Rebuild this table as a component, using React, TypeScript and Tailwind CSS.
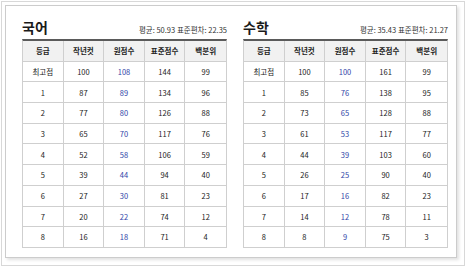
import React from 'react';

type Row = [string, number, number, number, number];

type Subject = {
  title: string;
  avg: string;
  sd: string;
  rows: Row[];
};

const HEADERS = ['등급', '작년컷', '원점수', '표준점수', '백분위'];

const SUBJECTS: Subject[] = [
  {
    title: '국어',
    avg: '50.93',
    sd: '22.35',
    rows: [
      ['최고점', 100, 108, 144, 99],
      ['1', 87, 89, 134, 96],
      ['2', 77, 80, 126, 88],
      ['3', 65, 70, 117, 76],
      ['4', 52, 58, 106, 59],
      ['5', 39, 44, 94, 40],
      ['6', 27, 30, 81, 23],
      ['7', 20, 22, 74, 12],
      ['8', 16, 18, 71, 4]
    ]
  },
  {
    title: '수학',
    avg: '35.43',
    sd: '21.27',
    rows: [
      ['최고점', 100, 100, 161, 99],
      ['1', 85, 76, 138, 95],
      ['2', 73, 65, 128, 88],
      ['3', 61, 53, 117, 77],
      ['4', 44, 39, 103, 60],
      ['5', 26, 25, 90, 40],
      ['6', 17, 16, 82, 23],
      ['7', 14, 12, 78, 11],
      ['8', 8, 9, 75, 3]
    ]
  }
];

const ScoreTable = ({ subject }: { subject: Subject }) => {
  return (
    <div className="w-[205px] flex flex-col">
      <div className="h-[33px] flex justify-between items-end pb-[5px]">
        <span className="text-[14px] leading-none font-bold text-[#1a1a1a]">{subject.title}</span>
        <span className="text-[7.5px] leading-none text-[#333] mb-[1px]">
          평균: {subject.avg} 표준편차: {subject.sd}
        </span>
      </div>
      <div className="border-t-2 border-[#5a5a5a] border-x border-x-[#cfcfcf]">
        <div className="grid grid-cols-5 h-[20.7px] bg-[#f1f1f1] border-b border-[#cfcfcf]">
          {HEADERS.map((h, i) => (
            <div
              key={h}
              className={
                'flex items-center justify-center text-[7.5px] font-bold text-[#222] ' +
                (i < 4 ? 'border-r border-[#cfcfcf]' : '')
              }
            >
              {h}
            </div>
          ))}
        </div>
        {subject.rows.map((row) => (
          <div key={row[0]} className="grid grid-cols-5 h-[20.7px] border-b border-[#cfcfcf]">
            {row.map((v, i) => (
              <div
                key={i}
                className={
                  'flex items-center justify-center text-[7.5px] ' +
                  (i === 2 ? 'text-[#2f45a8] ' : 'text-[#222] ') +
                  (i < 4 ? 'border-r border-[#cfcfcf]' : '')
                }
              >
                {v}
              </div>
            ))}
          </div>
        ))}
      </div>
    </div>
  );
};

export default function App() {
  return (
    <div
      className="w-[466px] h-[267px] bg-white p-px"
      style={{ fontFamily: '"Noto Sans CJK KR", "Noto Sans", sans-serif' }}
    >
      <div className="w-[464px] h-[265px] border border-[#d8d8d8] p-[3px]">
        <div className="w-[452px] h-[253px] border border-[#cccccc] shadow-[2px_2px_3px_rgba(0,0,0,0.12)] bg-white pl-[16px] flex gap-[16px]">
          {SUBJECTS.map((s) => (
            <ScoreTable key={s.title} subject={s} />
          ))}
        </div>
      </div>
    </div>
  );
}
